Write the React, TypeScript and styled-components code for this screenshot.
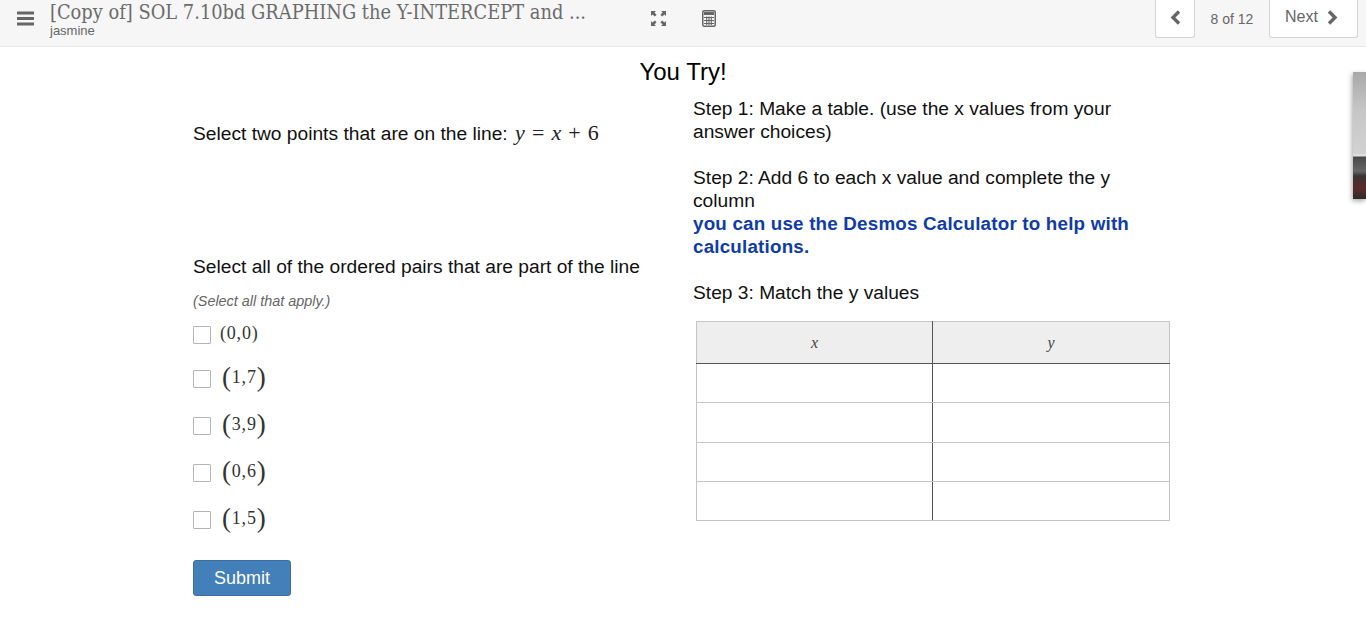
import React from 'react';
import styled, { createGlobalStyle } from 'styled-components';

const GlobalStyle = createGlobalStyle`
  html, body {
    margin: 0;
    padding: 0;
    background: #fff;
    font-family: "Liberation Sans", Arial, sans-serif;
    color: #111;
    overflow: hidden;
  }
`;

const Page = styled.div`
  position: relative;
  width: 1366px;
  height: 630px;
  overflow: hidden;
`;

const TopBar = styled.header`
  display: flex;
  align-items: flex-start;
  height: 46px;
  background: #f6f6f6;
  border-bottom: 1px solid #e8e8e8;
`;

const MenuButton = styled.div`
  width: 50px;
  padding: 11px 0 0 17px;
  box-sizing: border-box;
  color: #666;
`;

const TitleBlock = styled.div`
  width: 580px;
  padding-top: 1px;
`;

const Title = styled.div`
  font-family: "DejaVu Serif", serif;
  font-size: 20px;
  line-height: 22px;
  color: #6b6b6b;
  white-space: nowrap;
  transform-origin: left center;
  transform: scaleX(0.892);
`;

const Owner = styled.div`
  font-size: 13px;
  line-height: 16px;
  color: #666;
`;

const ToolIcons = styled.div`
  display: flex;
  align-items: center;
  gap: 35px;
  padding-top: 10px;
  margin-left: 20px;
  color: #666;
`;

const Pager = styled.div`
  display: flex;
  align-items: flex-start;
  margin-left: auto;
  margin-right: 8px;
`;

const PagerButton = styled.div<{ $wide?: boolean }>`
  display: flex;
  align-items: center;
  justify-content: center;
  gap: 9px;
  width: ${(p) => (p.$wide ? '89px' : '40px')};
  height: 38px;
  box-sizing: border-box;
  padding: ${(p) => (p.$wide ? '0 4px 3px 0' : '0 0 2px')};
  background: #fff;
  border: 1px solid #d4d4d4;
  border-top: none;
  border-radius: 0 0 3px 3px;
  font-size: 16px;
  color: #666;
`;

const PagerCount = styled.div`
  width: 74px;
  text-align: center;
  font-size: 14px;
  line-height: 38px;
  color: #666;
`;

const Heading = styled.h1`
  margin: 0;
  padding-top: 11px;
  font-size: 24px;
  font-weight: 400;
  line-height: 27px;
  text-align: center;
  color: #000;
`;

const Columns = styled.main`
  display: flex;
  padding-left: 193px;
`;

const LeftColumn = styled.section`
  width: 500px;
`;

const RightColumn = styled.section`
  width: 480px;
  padding-top: 12px;
`;

const Prompt = styled.p`
  margin: 0;
  font-size: 19.2px;
  line-height: 23px;
  color: #111;
`;

const LinePrompt = styled(Prompt)`
  padding-top: 36px;
`;

const PartPrompt = styled(Prompt)`
  padding-top: 110px;
`;

const Equation = styled.span`
  font-family: "Liberation Serif", serif;
  font-size: 22px;
  letter-spacing: 0.8px;
  margin-left: 2px;
  color: #222;
  i { font-style: italic; }
`;

const Hint = styled.div`
  margin-top: 15px;
  font-size: 14.4px;
  line-height: 17px;
  font-style: italic;
  color: #666;
`;

const Options = styled.div`
  margin-top: 4px;
`;

const Option = styled.label<{ $small?: boolean }>`
  display: flex;
  align-items: center;
  height: ${(p) => (p.$small ? '41px' : '47px')};
  gap: ${(p) => (p.$small ? '9px' : '11px')};
`;

const Box = styled.span`
  box-sizing: border-box;
  width: 18px;
  height: 18px;
  background: #fff;
  border: 1px solid #b5b5b5;
  border-radius: 1px;
`;

const Pair = styled.span<{ $small?: boolean }>`
  font-family: "Liberation Serif", serif;
  font-size: 18px;
  letter-spacing: 0.8px;
  color: #333;
  display: flex;
  align-items: center;
  margin-bottom: 3px;
  b {
    font-weight: 400;
    font-size: ${(p) => (p.$small ? '18px' : '27px')};
    line-height: 23px;
    color: #333;
  }
`;

const SubmitButton = styled.button`
  display: block;
  width: 98px;
  height: 36px;
  margin-top: 17px;
  background: #437fb8;
  border: 1px solid #3a6f9f;
  border-radius: 3px;
  color: #fff;
  font-family: "Liberation Sans", Arial, sans-serif;
  font-size: 18px;
`;

const Blue = styled.strong`
  display: block;
  color: #0f3bab;
  font-weight: 700;
  font-size: 18.8px;
  letter-spacing: 0.2px;
`;

const Gap = styled.div`
  height: 23px;
`;

const MathTable = styled.table`
  width: 474px;
  height: 200px;
  margin: 17px 0 0 3px;
  border-collapse: collapse;
  table-layout: fixed;
  th, td {
    border: 1px solid #c4c4c4;
    padding: 0;
  }
  th {
    height: 41px;
    background: #eeeeee;
    border-bottom: 1px solid #555;
    font-family: "Liberation Serif", serif;
    font-size: 16px;
    font-style: italic;
    font-weight: 400;
    color: #444;
  }
  th:first-child {
    width: 235px;
  }
  td {
    height: 38px;
  }
  th:first-child, td:first-child {
    border-right: 1px solid #555;
  }
`;

const SideThumb = styled.div`
  position: absolute;
  left: 1353px;
  top: 72px;
  width: 13px;
  height: 127px;
  background: linear-gradient(#a8a8a8 0%, #c6c6c6 30%, #d2d2d2 64%, #e6e6e6 66%, #4a4a4a 67%, #666 78%, #3a3434 82%, #5c2a2a 92%, #2a2a2a 100%);
  box-shadow: -1px 2px 5px rgba(0, 0, 0, 0.35);
`;

const rows = [0, 1, 2, 3];

const options = [
  { label: '0,0', small: true },
  { label: '1,7' },
  { label: '3,9' },
  { label: '0,6' },
  { label: '1,5' },
];

const App: React.FC = () => {
  return (
    <Page>
      <GlobalStyle />
      <TopBar>
        <MenuButton>
          <svg width="17" height="15" viewBox="0 0 17 15" fill="currentColor">
            <rect x="0" y="0.5" width="17" height="3" />
            <rect x="0" y="6" width="17" height="3" />
            <rect x="0" y="11.5" width="17" height="3" />
          </svg>
        </MenuButton>
        <TitleBlock>
          <Title>[Copy of] SOL 7.10bd GRAPHING the Y-INTERCEPT and ...</Title>
          <Owner>jasmine</Owner>
        </TitleBlock>
        <ToolIcons>
          <svg width="17" height="17" viewBox="0 0 17 17" fill="currentColor">
            <path d="M1 1h5L4.4 2.6 6.6 4.8 4.8 6.6 2.6 4.4 1 6zM16 1v5l-1.6-1.6-2.2 2.2-1.8-1.8 2.2-2.2L11 1zM1 16v-5l1.6 1.6 2.2-2.2 1.8 1.8-2.2 2.2L6 16zM16 16h-5l1.6-1.6-2.2-2.2 1.8-1.8 2.2 2.2L16 11z" />
          </svg>
          <svg width="14" height="17" viewBox="0 0 14 17" fill="none" stroke="currentColor">
            <rect x="0.75" y="0.75" width="12.5" height="15.5" rx="1.5" strokeWidth="1.5" />
            <rect x="2" y="2" width="10" height="3" fill="currentColor" stroke="none" />
            <path d="M2 7.5h10M2 10.5h10M2 13.5h10M4.7 6.5v8.5M7 6.5v8.5M9.3 6.5v8.5" strokeWidth="1.1" />
          </svg>
        </ToolIcons>
        <Pager>
          <PagerButton>
            <svg width="11" height="15" viewBox="0 0 11 15" fill="none" stroke="currentColor" strokeWidth="3.4">
              <path d="M9 1.5 3 7.5 9 13.5" />
            </svg>
          </PagerButton>
          <PagerCount>8 of 12</PagerCount>
          <PagerButton $wide>
            Next
            <svg width="11" height="15" viewBox="0 0 11 15" fill="none" stroke="currentColor" strokeWidth="3.4">
              <path d="M2 1.5 8 7.5 2 13.5" />
            </svg>
          </PagerButton>
        </Pager>
      </TopBar>

      <Heading>You Try!</Heading>

      <Columns>
        <LeftColumn>
          <LinePrompt>
            Select two points that are on the line: <Equation><i>y</i> = <i>x</i> + 6</Equation>
          </LinePrompt>
          <PartPrompt>Select all of the ordered pairs that are part of the line</PartPrompt>
          <Hint>(Select all that apply.)</Hint>
          <Options>
            {options.map((o) => (
              <Option key={o.label} $small={o.small}>
                <Box />
                <Pair $small={o.small}>
                  <b>(</b>
                  {o.label}
                  <b>)</b>
                </Pair>
              </Option>
            ))}
          </Options>
          <SubmitButton>Submit</SubmitButton>
        </LeftColumn>

        <RightColumn>
          <Prompt>Step 1: Make a table. (use the x values from your answer choices)</Prompt>
          <Gap />
          <Prompt>
            Step 2: Add 6 to each x value and complete the y column
            <Blue>you can use the Desmos Calculator to help with calculations.</Blue>
          </Prompt>
          <Gap />
          <Prompt>Step 3: Match the y values</Prompt>
          <MathTable>
            <thead>
              <tr>
                <th>x</th>
                <th>y</th>
              </tr>
            </thead>
            <tbody>
              {rows.map((r) => (
                <tr key={r}>
                  <td />
                  <td />
                </tr>
              ))}
            </tbody>
          </MathTable>
        </RightColumn>
      </Columns>

      <SideThumb />
    </Page>
  );
};

export default App;
